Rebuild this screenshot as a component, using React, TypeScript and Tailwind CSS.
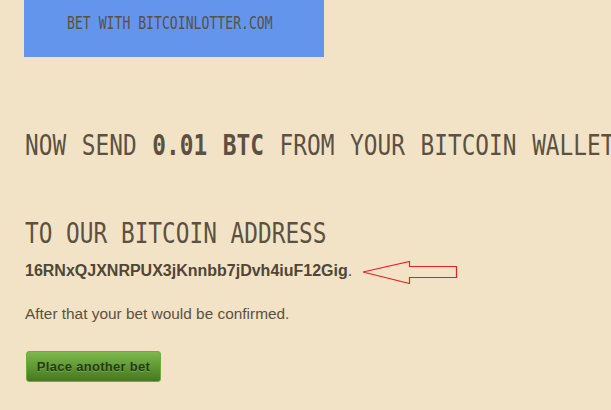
import React from 'react';

const mono = "font-['DejaVu_Sans_Mono',monospace]";
const sans = "font-['Liberation_Sans',Arial,sans-serif]";

const Arrow: React.FC = () => (
  <svg
    className="absolute left-[336px] top-[1px]"
    width="98"
    height="26"
    viewBox="0 0 98 26"
    fill="none"
  >
    <path
      d="M2 13 L48.5 2.5 L48.5 7.5 L95.5 7.5 L95.5 18.5 L48.5 18.5 L48.5 24.5 Z"
      stroke="#ee1c24"
      strokeWidth="1.2"
    />
  </svg>
);

export default function App() {
  return (
    <div className="min-h-screen w-full overflow-hidden bg-[#f3e3c6] text-[#5a5142]">
      {/* Banner */}
      <div className="ml-[24px] h-[57px] w-[300px] bg-[#6495ed] pl-[43px] pt-[14px]">
        <div className={`${mono} origin-left scale-x-[0.73] whitespace-nowrap text-[18px] leading-none text-[#5a5142]`}>
          BET WITH BITCOINLOTTER.COM
        </div>
      </div>

      <div className="flex flex-col pl-[25px]">
        <h1 className={`${mono} mt-[74px] origin-left scale-x-[0.785] whitespace-nowrap text-[29px] font-normal leading-none [word-spacing:2.5px]`}>
          NOW SEND <b className="font-bold">0.01 BTC</b> FROM YOUR BITCOIN WALLET
        </h1>

        <h2 className={`${mono} mt-[59px] origin-left scale-x-[0.785] whitespace-nowrap text-[29px] font-normal leading-none`}>
          TO OUR BITCOIN ADDRESS
        </h2>

        <div className="relative mt-[10px] h-[15px]">
          <span className={`${sans} text-[16px] font-bold leading-none text-[#4f4637]`}>
            16RNxQJXNRPUX3jKnnbb7jDvh4iuF12Gig<span className="font-normal">.</span>
          </span>
          <Arrow />
        </div>

        <p className={`${sans} mt-[33px] text-[15.4px] leading-none text-[#5a5142]`}>
          After that your bet would be confirmed.
        </p>

        <button
          className={`${sans} ml-px mt-[30px] flex h-[31px] w-[135px] items-center justify-center rounded-[3px] border border-[#6cab3c] bg-gradient-to-b from-[#7cb94b] to-[#46791f] text-[13px] font-bold tracking-[0.3px] text-[#263a12] [text-shadow:0_1px_0_rgba(255,255,255,0.2)]`}
        >
          Place another bet
        </button>
      </div>
    </div>
  );
}
